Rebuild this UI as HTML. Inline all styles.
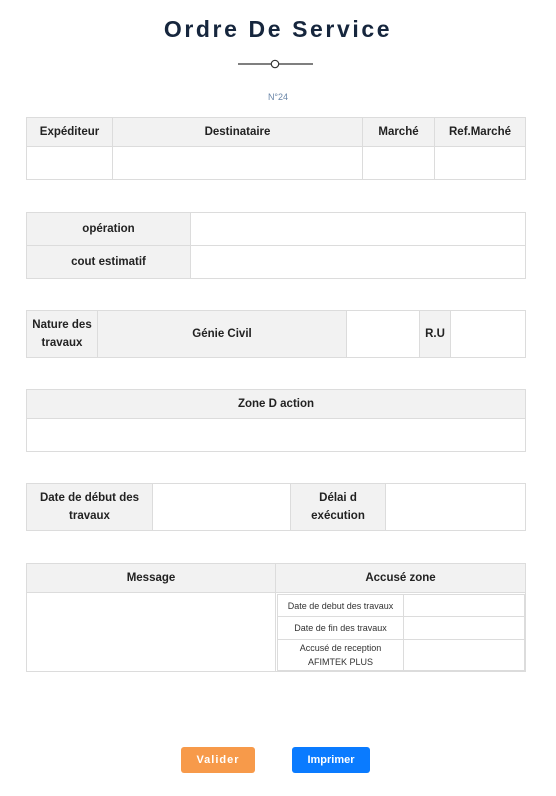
<!DOCTYPE html>
<html><head><style>
body{margin:0;width:556px;height:796px;background:#fff;font-family:"Liberation Sans",sans-serif;position:relative;overflow:hidden}
.b{position:absolute;box-sizing:border-box;border:1px solid #dcdcdc;display:flex;align-items:center;justify-content:center;text-align:center;font-size:11.5px;font-weight:bold;color:#222;line-height:18px}
.h{background:#f2f2f2}
.s{font-weight:normal;font-size:9px;line-height:14px;color:#333}
h1{position:absolute;top:16px;left:0;width:556px;margin:0;text-align:center;font-size:23px;letter-spacing:2.6px;color:#16263d}
.btn{position:absolute;top:747px;height:26px;border-radius:3px;color:#fff;font-weight:bold;font-size:11px;display:flex;align-items:center;justify-content:center}
</style></head><body>
<h1>Ordre De Service</h1>
<svg style="position:absolute;left:0;top:0" width="556" height="80"><line x1="238" y1="64" x2="271" y2="64" stroke="#333" stroke-width="1.2"/><line x1="279" y1="64" x2="313" y2="64" stroke="#333" stroke-width="1.2"/><circle cx="275" cy="64" r="3.7" fill="#fff" stroke="#333" stroke-width="1.2"/></svg>
<div style="position:absolute;top:92px;left:0;width:556px;text-align:center;font-size:9px;color:#6a86a8">N°24</div>

<div class="b h" style="left:26px;top:117px;width:87px;height:30px">Expéditeur</div>
<div class="b h" style="left:112px;top:117px;width:251px;height:30px">Destinataire</div>
<div class="b h" style="left:362px;top:117px;width:73px;height:30px">Marché</div>
<div class="b h" style="left:434px;top:117px;width:92px;height:30px">Ref.Marché</div>
<div class="b" style="left:26px;top:146px;width:87px;height:34px"></div>
<div class="b" style="left:112px;top:146px;width:251px;height:34px"></div>
<div class="b" style="left:362px;top:146px;width:73px;height:34px"></div>
<div class="b" style="left:434px;top:146px;width:92px;height:34px"></div>

<div class="b h" style="left:26px;top:212px;width:165px;height:34px">opération</div>
<div class="b" style="left:190px;top:212px;width:336px;height:34px"></div>
<div class="b h" style="left:26px;top:245px;width:165px;height:34px">cout estimatif</div>
<div class="b" style="left:190px;top:245px;width:336px;height:34px"></div>

<div class="b h" style="left:26px;top:310px;width:72px;height:48px">Nature des travaux</div>
<div class="b h" style="left:97px;top:310px;width:250px;height:48px">Génie Civil</div>
<div class="b" style="left:346px;top:310px;width:74px;height:48px"></div>
<div class="b h" style="left:419px;top:310px;width:32px;height:48px">R.U</div>
<div class="b" style="left:450px;top:310px;width:76px;height:48px"></div>

<div class="b h" style="left:26px;top:389px;width:500px;height:30px">Zone D action</div>
<div class="b" style="left:26px;top:418px;width:500px;height:34px"></div>

<div class="b h" style="left:26px;top:483px;width:127px;height:48px">Date de début des travaux</div>
<div class="b" style="left:152px;top:483px;width:139px;height:48px"></div>
<div class="b h" style="left:290px;top:483px;width:96px;height:48px">Délai d<br>exécution</div>
<div class="b" style="left:385px;top:483px;width:141px;height:48px"></div>

<div class="b h" style="left:26px;top:563px;width:250px;height:30px">Message</div>
<div class="b h" style="left:275px;top:563px;width:251px;height:30px">Accusé zone</div>
<div class="b" style="left:26px;top:592px;width:250px;height:80px"></div>
<div class="b" style="left:275px;top:592px;width:251px;height:80px"></div>
<div class="b s" style="left:277px;top:594px;width:127px;height:23px">Date de debut des travaux</div>
<div class="b" style="left:403px;top:594px;width:122px;height:23px"></div>
<div class="b s" style="left:277px;top:616px;width:127px;height:24px">Date de fin des travaux</div>
<div class="b" style="left:403px;top:616px;width:122px;height:24px"></div>
<div class="b s" style="left:277px;top:639px;width:127px;height:32px">Accusé de reception<br>AFIMTEK PLUS</div>
<div class="b" style="left:403px;top:639px;width:122px;height:32px"></div>

<div class="btn" style="left:181px;width:74px;background:#f79a4a;letter-spacing:1px">Valider</div>
<div class="btn" style="left:292px;width:78px;background:#0a7bff">Imprimer</div>
</body></html>
